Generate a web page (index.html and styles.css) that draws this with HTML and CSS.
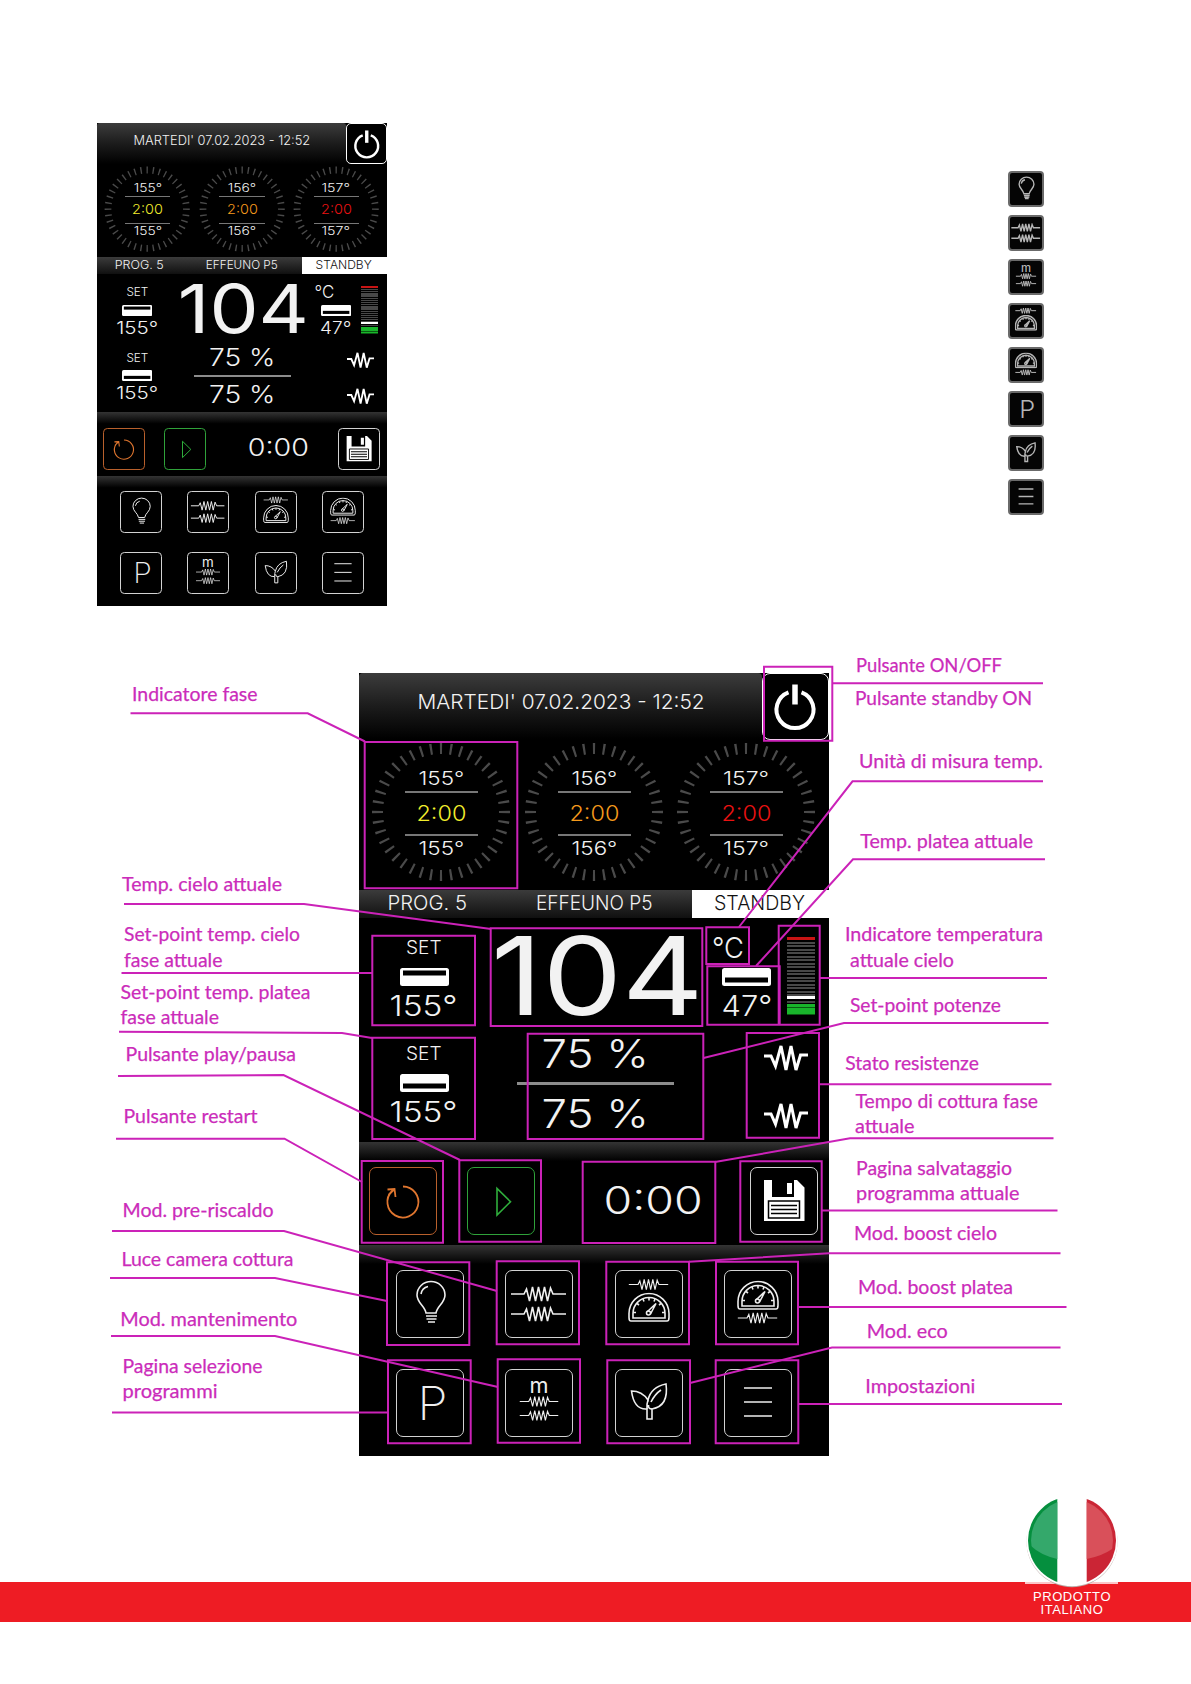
FILE: index.html
```html
<!DOCTYPE html>
<html lang="it">
<head>
<meta charset="utf-8">
<title>Pannello di controllo</title>
<link rel="stylesheet" href="styles.css">
</head>
<body>
<svg class="defs" aria-hidden="true">
  <symbol id="zig" viewBox="0 0 55 18"><path d="M0 9H13L15.500 4L18.500 16L21.500 2L24.500 16L27.500 2L30.500 16L33.500 2L36.500 16L39.500 3L42 9H55"/></symbol>
  <symbol id="gauge" viewBox="0 0 42 30"><path d="M3 28.500Q1 28.500 1 25V21A20 20 0 0 1 41 21V25Q41 28.500 39 28.500Z"/><path d="M5 25.500V21A16 16 0 0 1 37 21V25.500Z"/><path d="M5 20h3M37 20h-3M9 11l2 1.500M15 6.500l1 2.500M21 5v3M27 6.500l-1 2.500M33 11l-2 1.500"/><circle cx="20.500" cy="20.500" r="2"/><path d="M19.500 19L28 11L22.500 21.500"/></symbol>
  <symbol id="bulb" viewBox="0 0 68 68"><path d="M30 43C29 36 21 33 21 25A14 13.500 0 0 1 49 25C49 33 41 36 40 43Z"/><path d="M25 24Q26 18 32 16.500M30 46H41M30.500 49H40.500M32 52H39"/></symbol>
  <symbol id="preheat" viewBox="0 0 68 68"><use href="#zig" x="6" y="15" width="55" height="18"/><use href="#zig" x="6" y="35" width="55" height="18"/></symbol>
  <symbol id="top-boost" viewBox="0 0 68 68"><use href="#zig" x="13.500" y="8" width="40" height="13"/><use href="#gauge" x="13" y="22.500" width="42" height="30"/></symbol>
  <symbol id="base-boost" viewBox="0 0 68 68"><use href="#gauge" x="13" y="10.500" width="42" height="30"/><use href="#zig" x="13.500" y="41.500" width="40" height="13"/></symbol>
  <symbol id="hold" viewBox="0 0 68 68"><use href="#zig" x="14.500" y="26" width="39" height="13"/><use href="#zig" x="14.500" y="40" width="39" height="13"/></symbol>
  <symbol id="eco" viewBox="0 0 68 68"><path d="M32 50V40Q19 41 16.500 22Q27 22 33 31Q36 18 51 15Q54 37 37 40V50Z"/><path d="M32 40Q31.500 35 33 31M37 40Q33 40 33.500 36M36 33Q40 25 46 21"/></symbol>
  <symbol id="menu" viewBox="0 0 68 68"><path d="M20 19H48M20 33H48M20 47H48"/></symbol>
  <symbol id="tray-low" viewBox="0 0 49 18"><rect width="49" height="18" rx="2.500" fill="#fff"/><rect x="3" y="9.500" width="43" height="5" fill="#000"/></symbol>
  <symbol id="tray-high" viewBox="0 0 49 18"><rect width="49" height="18" rx="2.500" fill="#fff"/><rect x="3" y="2.500" width="43" height="5" fill="#000"/></symbol>
  <symbol id="coil" viewBox="0 0 44 30"><path d="M0 13H7L11.500 23L17 3L22 27L27 3L32 27L36.500 12H44" fill="none" stroke="#fff" stroke-width="3"/></symbol>
  <symbol id="ring" viewBox="0 0 140 140"><circle cx="70" cy="70" r="63.500" pathLength="400" fill="none" stroke="#4a4a4a" stroke-width="11" stroke-dasharray="2.200 7.800" stroke-dashoffset="1.100"/></symbol>
</svg>

<main class="page">
  <section class="intro">
    <div class="preview" id="preview"></div>
    <ul class="legend">
      <li><svg class="icon"><use href="#bulb"/></svg></li>
      <li><svg class="icon"><use href="#preheat"/></svg></li>
      <li><svg class="icon" viewBox="0 0 68 68"><text class="glyph" x="24.500" y="24" font-size="21" font-weight="500" textLength="19" lengthAdjust="spacingAndGlyphs">m</text><use href="#hold"/></svg></li>
      <li><svg class="icon"><use href="#top-boost"/></svg></li>
      <li><svg class="icon"><use href="#base-boost"/></svg></li>
      <li><svg class="icon" viewBox="0 0 68 68"><text class="glyph" x="21.500" y="51" font-size="47" font-weight="300" textLength="30" lengthAdjust="spacingAndGlyphs">P</text></svg></li>
      <li><svg class="icon"><use href="#eco"/></svg></li>
      <li><svg class="icon"><use href="#menu"/></svg></li>
    </ul>
  </section>

  <div class="panel" id="panel">
    <header class="top">
      <div class="date"><span data-w="287">MARTEDI' 07.02.2023 - 12:52</span></div>
      <div class="power"><svg width="64" height="64" viewBox="0 0 64 64" fill="none" stroke="#fff"><path d="M25.500 18.300A18.500 18.500 0 1 0 38.500 18.300" stroke-width="4"/><path d="M32 10.500V30.500" stroke-width="5.500"/></svg></div>
    </header>
    <section class="dials">
      <div class="dial yellow"><svg class="ring"><use href="#ring"/></svg><span data-w="46">155°</span><b><span data-w="50">2:00</span></b><span data-w="46">155°</span></div>
      <div class="dial orange"><svg class="ring"><use href="#ring"/></svg><span data-w="46">156°</span><b><span data-w="50">2:00</span></b><span data-w="46">156°</span></div>
      <div class="dial red"><svg class="ring"><use href="#ring"/></svg><span data-w="46">157°</span><b><span data-w="50">2:00</span></b><span data-w="46">157°</span></div>
    </section>
    <section class="status">
      <div><span data-w="79">PROG. 5</span></div>
      <div><span data-w="116">EFFEUNO P5</span></div>
      <div class="standby"><span data-w="91">STANDBY</span></div>
    </section>
    <section class="readings">
      <div class="setpoints">
        <div class="set"><small><span data-w="36">SET</span></small><svg class="tray"><use href="#tray-high"/></svg><strong><span data-w="68">155°</span></strong></div>
        <div class="set"><small><span data-w="36">SET</span></small><svg class="tray"><use href="#tray-low"/></svg><strong><span data-w="68">155°</span></strong></div>
      </div>
      <div class="center">
        <div class="big"><span data-w="213">104</span></div>
        <div class="power-level"><span data-w="107">75 %</span></div>
        <div class="rule"></div>
        <div class="power-level"><span data-w="107">75 %</span></div>
      </div>
      <div class="side">
        <div class="floor">
          <div class="floor-temp"><div class="unit"><span data-w="32">°C</span></div><svg class="tray"><use href="#tray-low"/></svg><strong><span data-w="51">47°</span></strong></div>
          <div class="meter"><i class="hot"></i><i class="scale"></i><i class="mark"></i><i class="gap"></i><i class="ok"></i></div>
        </div>
        <svg class="coil"><use href="#coil"/></svg>
        <svg class="coil"><use href="#coil"/></svg>
      </div>
    </section>
    <section class="controls">
      <div class="btn restart"><svg width="68" height="68" viewBox="0 0 68 68"><path d="M34 19.500A15.500 15.500 0 1 1 23 24M26.500 30L25.500 22L18.500 22.500M25.500 22L19.500 28" fill="none" stroke="#e0762f" stroke-width="1.800"/></svg></div>
      <div class="btn play"><svg width="68" height="68" viewBox="0 0 68 68"><path d="M30 21.500V48L43.500 34.700Z" fill="none" stroke="#2fae3c" stroke-width="1.600"/></svg></div>
      <div class="time"><span data-w="99">0:00</span></div>
      <div class="btn"><svg width="68" height="68" viewBox="0 0 68 68"><path d="M14 13H22V30H44V13H47L54.500 20.500V54H14ZM37 16H42V27H37Z" fill="#fff" fill-rule="evenodd"/><path d="M18.500 34H49.500V51H18.500Z" fill="#fff" stroke="#000" stroke-width="1.500"/><path d="M21 38.500H47M21 42.500H47M21 46.500H47" stroke="#000" stroke-width="1.700"/></svg></div>
    </section>
    <section class="modes">
      <div class="btn"><svg class="icon"><use href="#bulb"/></svg></div>
      <div class="btn"><svg class="icon"><use href="#preheat"/></svg></div>
      <div class="btn"><svg class="icon"><use href="#top-boost"/></svg></div>
      <div class="btn"><svg class="icon"><use href="#base-boost"/></svg></div>
      <div class="btn"><svg class="icon" viewBox="0 0 68 68"><text class="glyph" x="21.500" y="51" font-size="47" font-weight="200" textLength="30" lengthAdjust="spacingAndGlyphs">P</text></svg></div>
      <div class="btn"><svg class="icon" viewBox="0 0 68 68"><text class="glyph" x="24.500" y="24" font-size="21" font-weight="400" textLength="19" lengthAdjust="spacingAndGlyphs">m</text><use href="#hold"/></svg></div>
      <div class="btn"><svg class="icon"><use href="#eco"/></svg></div>
      <div class="btn"><svg class="icon"><use href="#menu"/></svg></div>
    </section>
  </div>

  <svg class="callouts" width="1191" height="1684" viewBox="0 0 1191 1684">
    <g class="lines">
      <path d="M364.700 742H517.300V888.300H364.700ZM764 666.700H832.300V740.700H764ZM372.300 935.700H475V1025.300H372.300ZM372.300 1037.700H475V1139H372.300ZM490.700 928.300H702.300V1026H490.700ZM706.300 927.300H749V964H706.300ZM707.300 966.300H779.700V1024.700H707.300ZM778.700 925.700H819.700V1024.700H778.700ZM527.700 1033.700H703.300V1139H527.700ZM746.700 1033H819V1137.700H746.700Z"/>
      <path d="M361.700 1161H443V1242.700H361.700ZM459.300 1160.300H541V1241.700H459.300ZM582.700 1161.700H715.300V1243H582.700ZM740.300 1161.300H821.700V1241.700H740.300ZM387 1262.300H469.300V1345H387ZM496.700 1261.300H579V1344.300H496.700ZM606.300 1261.700H689V1344.300H606.300ZM716 1261.700H798V1344.300H716ZM388 1360.300H470.700V1443.300H388ZM497.700 1359.300H580V1442.700H497.700ZM607.300 1360.300H690V1443.300H607.300ZM715.700 1360.300H798.300V1443.300H715.700Z"/>
      <path d="M130.500 713.300H307.700L365 741.500M124 904H304L491 929M121.500 973H372.500M119 1031.700L342 1033L372 1038M118 1076L283.500 1075L460 1160M116 1138.700H284.500L362 1182M112 1231H284L497 1291M110 1278H275L387 1301M111 1336H275L498 1387M112 1412.500H388"/>
      <path d="M832 683.300H1043M1043 781.300H852.500L739 927M1045 859.300H853L756 966M1047 978H820M1048.500 1023H844L703.500 1058M1051.500 1084.300H818.500M1053.500 1138.300H850L715 1162M1057.500 1210.500H822M1060.500 1253.300H829L689 1261.700M1066.500 1307H798M1060.500 1347.500H832L690 1383M1062 1404H798"/>
    </g>
    <g class="labels">
      <text x="132" y="701.300" textLength="125.500" lengthAdjust="spacingAndGlyphs">Indicatore fase</text>
      <text x="122" y="891.300" textLength="160" lengthAdjust="spacingAndGlyphs">Temp. cielo attuale</text>
      <text x="124" y="941.300" textLength="176" lengthAdjust="spacingAndGlyphs">Set-point temp. cielo</text>
      <text x="124" y="967" textLength="98.500" lengthAdjust="spacingAndGlyphs">fase attuale</text>
      <text x="120.500" y="999.300" textLength="190" lengthAdjust="spacingAndGlyphs">Set-point temp. platea</text>
      <text x="120.500" y="1024.300" textLength="98.500" lengthAdjust="spacingAndGlyphs">fase attuale</text>
      <text x="125.500" y="1061.300" textLength="170.500" lengthAdjust="spacingAndGlyphs">Pulsante play/pausa</text>
      <text x="123.500" y="1123.300" textLength="134" lengthAdjust="spacingAndGlyphs">Pulsante restart</text>
      <text x="122.500" y="1217" textLength="151" lengthAdjust="spacingAndGlyphs">Mod. pre-riscaldo</text>
      <text x="121.500" y="1266" textLength="172" lengthAdjust="spacingAndGlyphs">Luce camera cottura</text>
      <text x="120.300" y="1325.700" textLength="177" lengthAdjust="spacingAndGlyphs">Mod. mantenimento</text>
      <text x="122.500" y="1372.700" textLength="140" lengthAdjust="spacingAndGlyphs">Pagina selezione</text>
      <text x="122.500" y="1398" textLength="95" lengthAdjust="spacingAndGlyphs">programmi</text>
      <text x="856" y="672" textLength="146" lengthAdjust="spacingAndGlyphs">Pulsante ON/OFF</text>
      <text x="855" y="705.300" textLength="177" lengthAdjust="spacingAndGlyphs">Pulsante standby ON</text>
      <text x="859" y="768" textLength="184" lengthAdjust="spacingAndGlyphs">Unità di misura temp.</text>
      <text x="860.200" y="848.300" textLength="173" lengthAdjust="spacingAndGlyphs">Temp. platea attuale</text>
      <text x="845" y="941.300" textLength="198" lengthAdjust="spacingAndGlyphs">Indicatore temperatura</text>
      <text x="850" y="967" textLength="104" lengthAdjust="spacingAndGlyphs">attuale cielo</text>
      <text x="850" y="1012" textLength="151" lengthAdjust="spacingAndGlyphs">Set-point potenze</text>
      <text x="845.300" y="1070.300" textLength="133.500" lengthAdjust="spacingAndGlyphs">Stato resistenze</text>
      <text x="855.500" y="1108" textLength="182.500" lengthAdjust="spacingAndGlyphs">Tempo di cottura fase</text>
      <text x="855" y="1133.300" textLength="59.500" lengthAdjust="spacingAndGlyphs">attuale</text>
      <text x="856" y="1174.700" textLength="156" lengthAdjust="spacingAndGlyphs">Pagina salvataggio</text>
      <text x="856" y="1200.300" textLength="163.500" lengthAdjust="spacingAndGlyphs">programma attuale</text>
      <text x="854" y="1240" textLength="143" lengthAdjust="spacingAndGlyphs">Mod. boost cielo</text>
      <text x="858" y="1294.300" textLength="155" lengthAdjust="spacingAndGlyphs">Mod. boost platea</text>
      <text x="866.700" y="1337.700" textLength="81" lengthAdjust="spacingAndGlyphs">Mod. eco</text>
      <text x="865.300" y="1393.300" textLength="110" lengthAdjust="spacingAndGlyphs">Impostazioni</text>
    </g>
  </svg>
</main>

<footer class="band">
  <div class="badge">
    <svg width="94" height="96" viewBox="0 0 94 96">
      <defs><clipPath id="disc"><circle cx="47" cy="47.500" r="44"/></clipPath>
      <clipPath id="shine"><circle cx="47" cy="47.500" r="41"/></clipPath></defs>
      <path d="M0 90H93" stroke="#fff" stroke-width="1.300"/>
      <circle cx="47" cy="48.700" r="45.500" fill="#b9a9a4"/>
      <circle cx="47" cy="47.500" r="45.800" fill="#fff"/>
      <g clip-path="url(#disc)"><path d="M0 0H32.300V96H0Z" fill="#058f3e"/><path d="M61.700 0H94V96H61.700Z" fill="#cb2535"/></g>
      <g clip-path="url(#shine)"><path d="M0 0H32.300V66Q14 62 4 51Z" fill="#34a86b"/><path d="M61.700 0H94V51Q80 63 61.700 66Z" fill="#d9505a"/></g>
    </svg>
    <div class="made"><span>PRODOTTO</span><span>ITALIANO</span></div>
  </div>
</footer>
<script src="panel.js"></script>
</body>
</html>
```
FILE: styles.css
```css
* { box-sizing: border-box; }
body {
  margin: 0;
  width: 1191px;
  height: 1684px;
  background: #fff;
  display: flex;
  flex-direction: column;
  overflow: hidden;
}
.defs { position: absolute; width: 0; height: 0; }
.page { position: relative; height: 1582px; padding-top: 123px; }
.intro { display: flex; justify-content: space-between; padding: 0 147px 0 97px; height: 550px; }
.preview .panel { zoom: 0.617; margin: 0; }

.legend { list-style: none; margin: 48px 0 0; padding: 0; display: flex; flex-direction: column; gap: 8px; }
.legend li { width: 36px; height: 36px; background: #050505; border: 2px solid #6a6a6a; border-radius: 4px; display: flex; align-items: center; justify-content: center; }
.legend .icon { width: 36px; height: 36px; flex: none; stroke: #b5b5b5; stroke-width: 2.6; color: #b5b5b5; }

.icon { width: 68px; height: 68px; fill: none; stroke: #eee; stroke-width: 1.6; color: #eee; }
.glyph { fill: currentColor; stroke: none; font-family: Inter, sans-serif; }

.panel {
  width: 470px;
  height: 783px;
  margin-left: 359px;
  background: #000;
  color: #f2f2f2;
  font-family: Inter, "Liberation Sans", sans-serif;
  font-weight: 300;
}
.panel span { display: inline-block; white-space: nowrap; }

.top { display: flex; justify-content: space-between; height: 67px; }
.date {
  width: 403px;
  height: 66px;
  border-radius: 4px 4px 0 0;
  background: linear-gradient(#3c3c3c, #1c1c1c 50%, #000);
  font-size: 20.500px;
  line-height: 57px;
  padding-left: 1px;
  text-align: center;
}
.power { width: 67px; height: 67px; border: 1.5px solid #fff; border-radius: 8px; background: #000; }

.dials { height: 150px; display: flex; justify-content: space-between; padding: 2px 12px 0; }
.dial { width: 141px; height: 140px; position: relative; display: flex; flex-direction: column; align-items: center; padding-top: 26px; font-size: 19px; line-height: 22px; }
.dial .ring { position: absolute; left: 0; top: 0; width: 140px; height: 140px; }
.dial b { width: 73px; height: 45px; border: solid #777; border-width: 2px 0; text-align: center; font-size: 22px; line-height: 40px; font-weight: 300; }
.dial > span:last-child { margin-top: 2px; }
.dial > span { margin-bottom: 1px; }
.yellow b { color: #f2ee2c; }
.orange b { color: #f59a1c; }
.red b { color: #ea1212; }

.status {
  display: grid;
  grid-template-columns: 137px 196px 137px;
  height: 28px;
  background: linear-gradient(#3b3b3b, #101010);
  font-size: 20px;
  line-height: 27px;
  text-align: center;
}
.status .standby { background: #fff; color: #111; padding-right: 3px; }

.readings { display: grid; grid-template-columns: 130px 212px 128px; height: 224px; }
.setpoints { padding-top: 18px; display: flex; flex-direction: column; gap: 17px; }
.set, .floor-temp { display: flex; flex-direction: column; align-items: center; }
.set small { font-size: 18px; line-height: 23px; margin-bottom: 9px; }
.tray { width: 49px; height: 18px; display: block; }
strong { font-size: 29px; line-height: 39px; height: 39px; font-weight: 300; }
.center { padding-top: 10px; text-align: center; }
.big { font-size: 108.500px; line-height: 95px; height: 97px; padding-left: 4px; font-weight: 400; }
.power-level { font-size: 40px; line-height: 57px; height: 57px; }
.rule { width: 157px; height: 3px; margin: 0 auto; background: #8c8c8c; }
.side { padding: 10px 14px 0 21px; display: flex; flex-direction: column; align-items: flex-end; }
.floor { display: flex; justify-content: space-between; width: 93px; height: 105px; flex: none; margin-bottom: 10px; }
.floor-temp { width: 49px; }
.unit { font-size: 29px; line-height: 39px; margin: 0 37px 1px 0; }
.meter { width: 28px; height: 78px; margin-top: 9px; display: flex; flex-direction: column; }
.meter .hot { height: 3px; background: #c81414; margin-bottom: 2px; }
.meter .scale { height: 54px; background: repeating-linear-gradient(#484848 0 2px, #000 2px 3.500px); }
.meter .mark { height: 3px; background: #fff; }
.meter .gap { height: 5px; background: linear-gradient(#000 40%, #444 40% 80%, #000 80%); }
.meter .ok { height: 11px; background: repeating-linear-gradient(#19b52b 0 2.800px, #0a5a12 2.800px 3.700px); }
.coil { width: 44px; height: 30px; margin: 0 7px 28px 0; flex: none; }

.controls {
  height: 103px;
  display: flex;
  padding: 25px 11px 0 10px;
  background: linear-gradient(#343434, #000 19px);
}
.btn { width: 68px; height: 68px; border: 1.5px solid #d2d2d2; border-radius: 7px; background: #000; display: flex; align-items: center; justify-content: center; }
.btn svg { flex: none; }
.restart { border-color: #b9602c; margin-right: 30px; }
.play { border-color: #2fa23a; }
.time { flex: 1; padding-left: 22px; text-align: center; font-size: 38.500px; line-height: 66px; }

.modes {
  height: 211px;
  display: grid;
  grid-template-columns: repeat(4, 68px);
  justify-content: space-between;
  align-content: start;
  row-gap: 31px;
  padding: 25px 37px 0;
  background: linear-gradient(#343434, #000 19px);
}

.callouts { position: absolute; left: 0; top: 0; }
.lines { fill: none; stroke: #cb22b8; stroke-width: 2; }
.labels { fill: #cb2cba; stroke: #cb2cba; stroke-width: 0.25; font: 400 19px Lato, "Liberation Sans", sans-serif; }

.band { position: relative; height: 40px; background: #ee1c24; }
.badge { position: absolute; left: 1025px; top: -89px; width: 94px; display: flex; flex-direction: column; }
.badge svg { display: block; }
.made { display: flex; flex-direction: column; align-items: center; margin-top: 1px; font: 13px/13px "Liberation Sans", Arial, sans-serif; letter-spacing: 0.6px; color: #fff; }
```
FILE: panel.js
```js
// Stretch each panel text to its display width, then reuse the panel as the small preview.
const panel = document.getElementById("panel");
for (const el of panel.querySelectorAll("[data-w]")) {
  el.style.transform = `scaleX(${el.dataset.w / el.offsetWidth})`;
}
const copy = panel.cloneNode(true);
copy.removeAttribute("id");
document.getElementById("preview").append(copy);
```
